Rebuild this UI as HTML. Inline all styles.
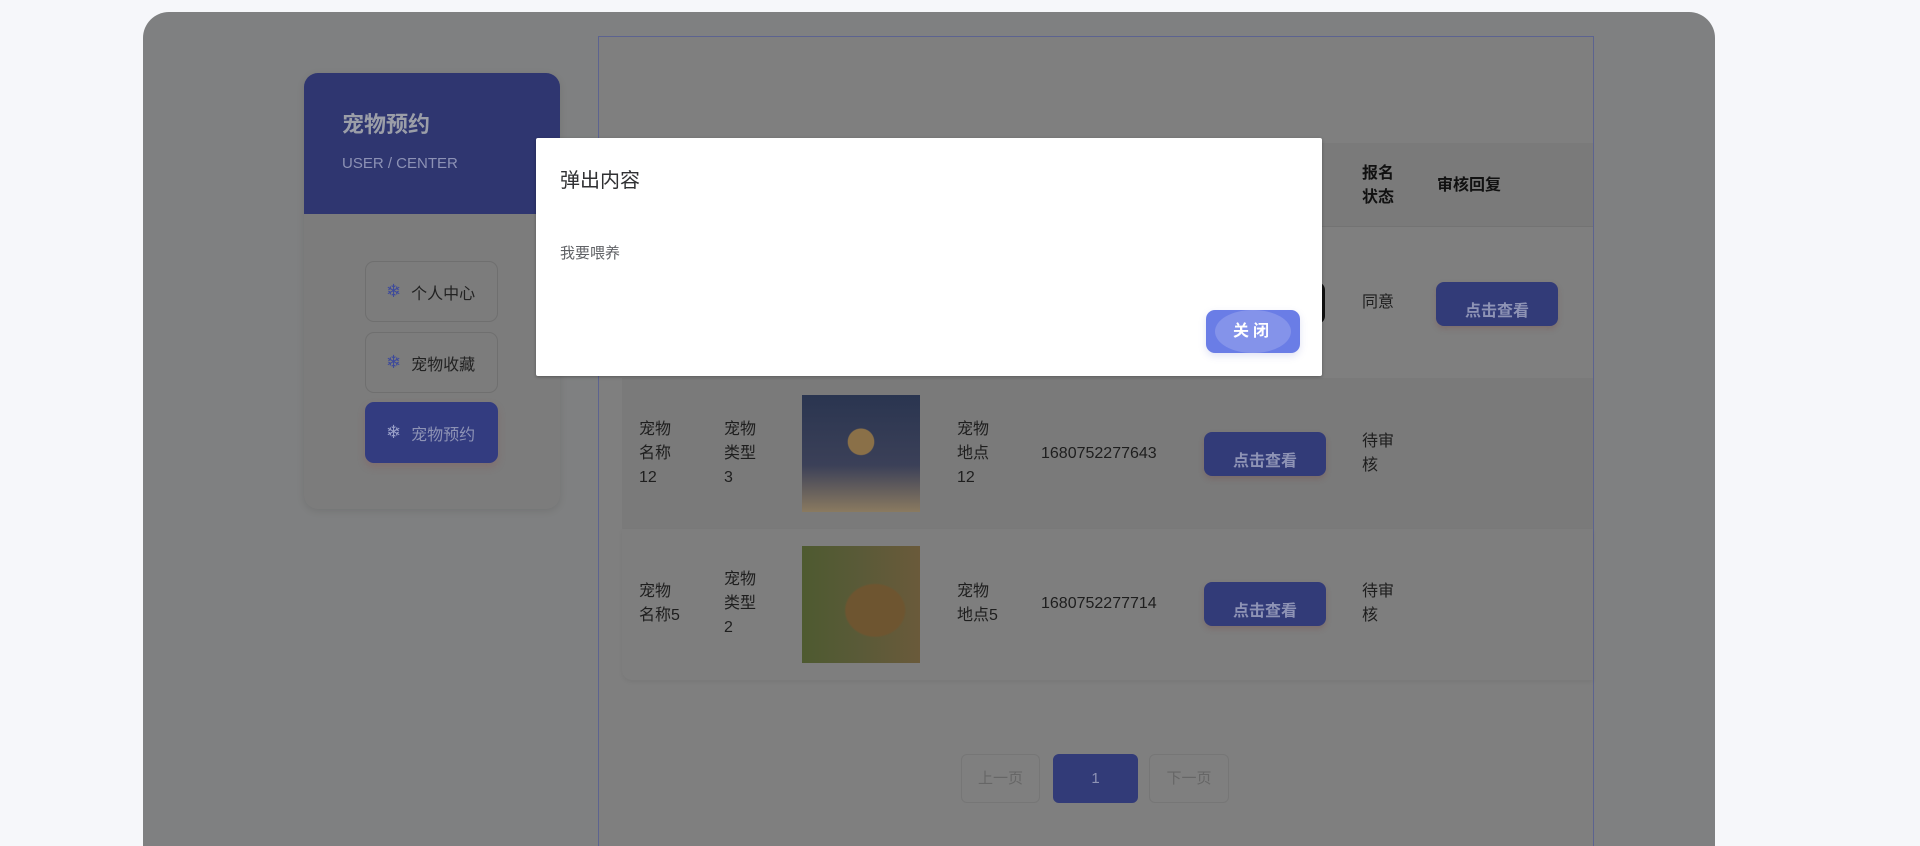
<!DOCTYPE html>
<html style="width:1920px;height:846px;overflow:hidden"><head><meta charset="utf-8"><style>
*{margin:0;padding:0;box-sizing:border-box}
body{width:1920px;height:846px;background:#f6f7fa;position:relative;overflow:hidden;font-family:"Liberation Sans","Noto Sans CJK SC",sans-serif;font-size:16px;color:#1a1a1a}
.abs{position:absolute}
.cont{left:143px;top:12px;width:1572px;height:834px;background:#7f8081;border-radius:26px 26px 0 0}
.side{left:304px;top:73px;width:256px;height:436px;background:#7c7c7c;border-radius:14px;overflow:hidden;box-shadow:0 2px 8px rgba(0,0,0,.1)}
.sh{left:0;top:0;width:256px;height:141px;background:#2f3670}
.mb{left:61px;width:133px;height:61px;border:1px solid #6f6f6f;border-radius:9px;display:flex;align-items:center;padding-left:20px;font-size:16px;color:#222}
.mb span{color:#3d4a9c;margin-right:10px;font-size:18px}
.main{left:598px;top:36px;width:996px;height:810px;border:1px solid #5c6390;border-bottom:none;background:#7f7f7f}
.cell{position:absolute;line-height:24px;font-size:16px;color:#1e1e1e}
.btn{position:absolute;width:122px;height:44px;background:#323b78;border-radius:8px;color:#8e93b5;font-weight:bold;font-size:16px;text-align:center;line-height:60px;overflow:hidden;box-shadow:0 3px 6px rgba(120,60,60,.25)}
.pg{position:absolute;top:754px;height:49px;border:1px solid #767676;border-radius:6px;color:#666;font-size:15px;text-align:center;line-height:47px}
</style></head><body>
<div class="abs cont"></div>
<div class="abs side">
 <div class="abs sh"></div>
 <div class="abs" style="left:38px;top:34px;font-size:22px;font-weight:bold;color:#9b9ea8">宠物预约</div>
 <div class="abs" style="left:38px;top:82px;font-size:15px;color:#8d92b5">USER / CENTER</div>
 <div class="abs mb" style="top:188px"><span>❄</span>个人中心</div>
 <div class="abs mb" style="top:259px"><span>❄</span>宠物收藏</div>
 <div class="abs mb" style="top:329px;background:#333c80;border-color:#333c80;color:#8e93b5;box-shadow:0 4px 8px rgba(140,80,80,.3)"><span style="color:#9aa0c8">❄</span>宠物预约</div>
</div>
<div class="abs main"></div>
<div class="abs" style="left:622px;top:143px;width:971px;height:84px;background:#7a7a7a;border-bottom:1px solid #737373"></div>
<div class="abs" style="left:622px;top:378px;width:971px;height:151px;background:#7a7a7a"></div>
<div class="abs" style="left:622px;top:529px;width:971px;height:151px;background:#7e7e7e;border-radius:0 0 0 10px;box-shadow:0 2px 4px rgba(0,0,0,.06)"></div>
<div class="cell" style="left:1362px;top:162px;font-weight:bold;color:#111">报名<br>状态</div>
<div class="cell" style="left:1437px;top:174px;font-weight:bold;color:#111">审核回复</div>
<div class="abs" style="left:1316px;top:282px;width:9px;height:42px;background:#111;border-radius:0 8px 8px 0"></div>
<div class="cell" style="left:1362px;top:291px">同意</div>
<div class="btn" style="left:1436px;top:282px">点击查看</div>
<div class="cell" style="left:639px;top:418px">宠物<br>名称<br>12</div>
<div class="cell" style="left:724px;top:418px">宠物<br>类型<br>3</div>
<div class="abs" style="left:802px;top:395px;width:118px;height:117px;background:radial-gradient(circle at 50% 40%,#8a7048 0 14%,transparent 15%),linear-gradient(#2a3550,#3b4058 60%,#8a7a60)"></div>
<div class="cell" style="left:957px;top:418px">宠物<br>地点<br>12</div>
<div class="cell" style="left:1041px;top:442px">1680752277643</div>
<div class="btn" style="left:1204px;top:432px">点击查看</div>
<div class="cell" style="left:1362px;top:430px">待审<br>核</div>
<div class="cell" style="left:639px;top:580px">宠物<br>名称5</div>
<div class="cell" style="left:724px;top:568px">宠物<br>类型<br>2</div>
<div class="abs" style="left:802px;top:546px;width:118px;height:117px;background:radial-gradient(ellipse at 62% 55%,#6e5530 0 28%,transparent 30%),linear-gradient(90deg,#4e5a30,#5a5a38 50%,#6a5a3a)"></div>
<div class="cell" style="left:957px;top:580px">宠物<br>地点5</div>
<div class="cell" style="left:1041px;top:592px">1680752277714</div>
<div class="btn" style="left:1204px;top:582px">点击查看</div>
<div class="cell" style="left:1362px;top:580px">待审<br>核</div>
<div class="pg" style="left:961px;width:79px">上一页</div>
<div class="pg" style="left:1053px;width:85px;background:#323b78;border-color:#323b78;color:#8e93b5">1</div>
<div class="pg" style="left:1149px;width:80px">下一页</div>
<div class="abs" style="left:536px;top:138px;width:786px;height:238px;background:#fff;border-radius:2px;box-shadow:0 1px 3px rgba(0,0,0,.3)">
 <div class="abs" style="left:24px;top:26px;font-size:20px;color:#303133">弹出内容</div>
 <div class="abs" style="left:24px;top:104px;font-size:15px;color:#606266">我要喂养</div>
 <div class="abs" style="left:670px;top:172px;width:94px;height:43px;border-radius:9px;background:#6a7de6;overflow:hidden;box-shadow:0 3px 8px rgba(100,110,200,.2)">
  <div class="abs" style="left:9px;top:0;width:76px;height:43px;border-radius:50%;background:#8493ea"></div>
  <div class="abs" style="left:0;top:0;width:94px;line-height:43px;text-align:center;color:#fff;font-weight:bold;font-size:16px;letter-spacing:4px">关闭</div>
 </div>
</div>
</body></html>
